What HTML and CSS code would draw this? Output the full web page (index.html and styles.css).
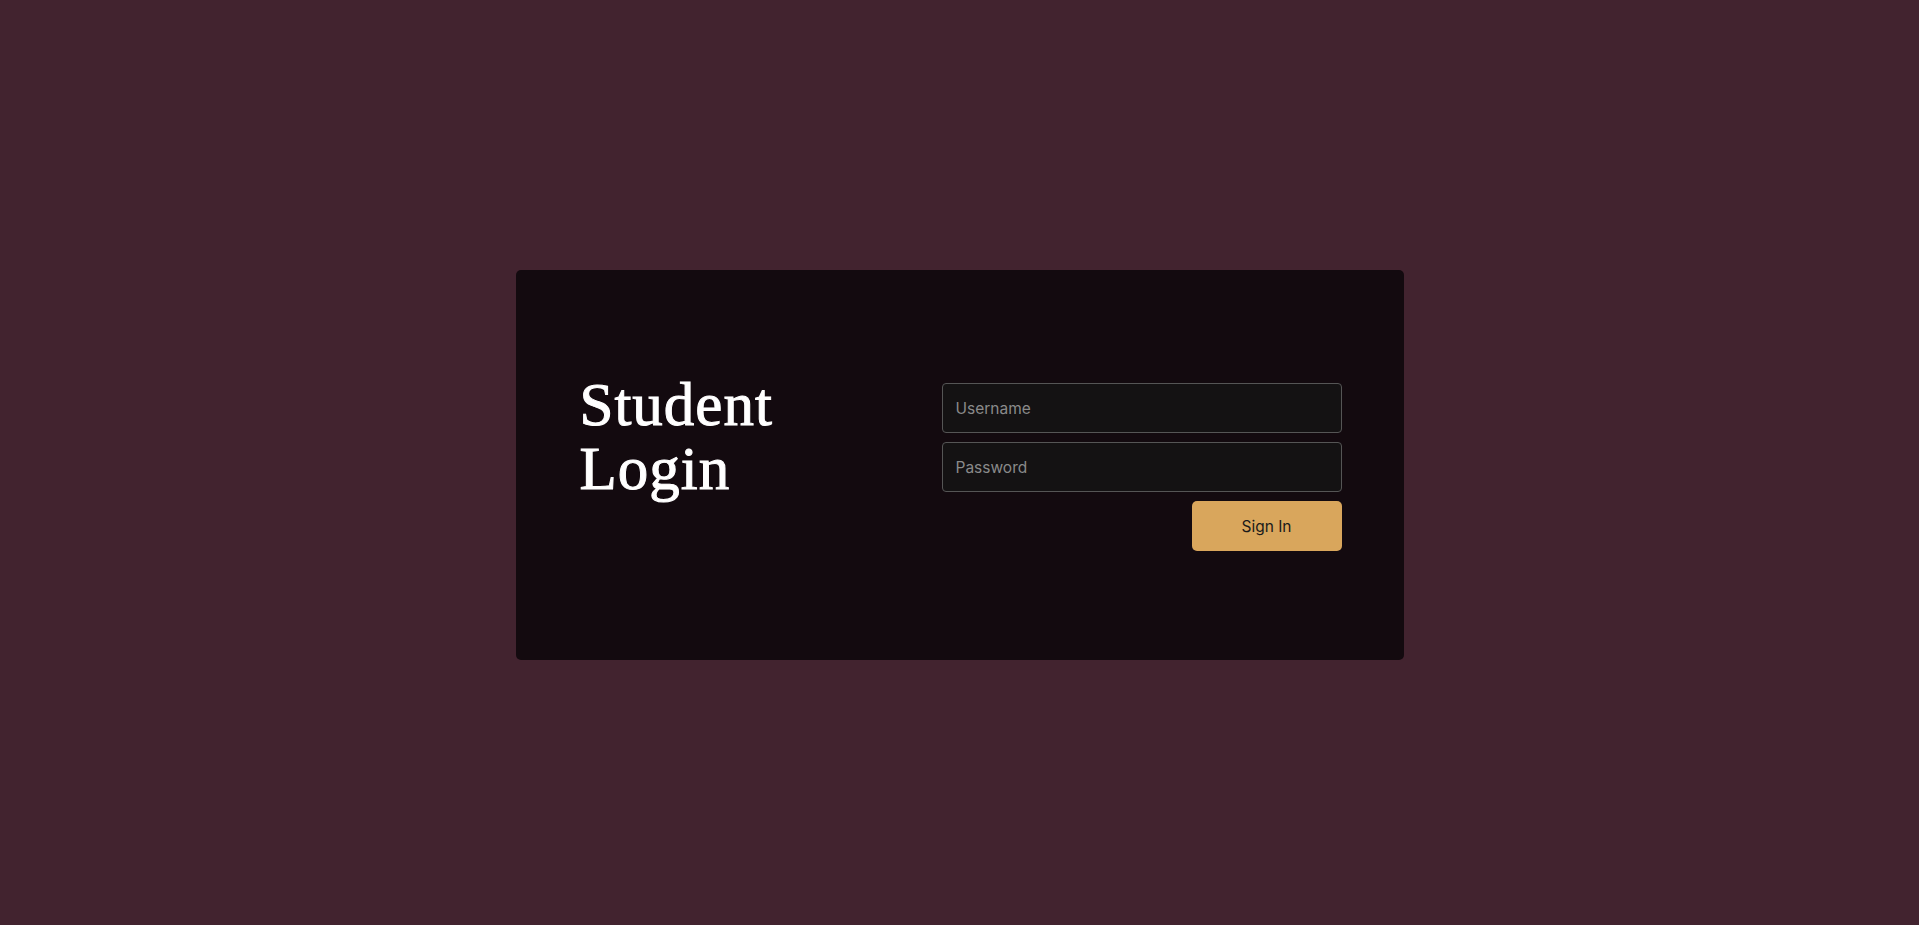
FILE: index.html
```html
<!doctype html>
<html lang="en">
  <head>
    <meta charset="utf-8" />
    <title>Student Login</title>
    <link rel="stylesheet" href="styles.css">
  </head>
  <body>
    <!-- Login card -->
    <div class="loginCard">
      <h1 class="title">Student Login</h1>
      <form class="loginForm">
        <input type="text" placeholder="Username" />
        <input type="password" placeholder="Password" />
        <div class="actions">
          <button type="button">Sign In</button>
        </div>
      </form>
    </div>
  </body>
</html>
```

FILE: styles.css
```css
* {
  box-sizing: border-box;
}
body {
  background: #42232f;
  color: #fff;
  font-family: Inter, "Noto Sans", sans-serif;
  margin: 0;
  min-height: 925px;
  display: flex;
  align-items: center;
  justify-content: center;
  padding-top: 5px;
}
.loginCard {
  width: 888px;
  height: 390px;
  background: #130a0f;
  border-radius: 5px;
  padding: 0 62px 0 64px;
  display: flex;
  align-items: center;
  justify-content: space-between;
}
.title {
  font-family: "Liberation Serif", serif;
  font-weight: normal;
  font-size: 61px;
  line-height: 64px;
  letter-spacing: 1px;
  width: 240px;
  margin: 0 0 56px;
  -webkit-text-stroke: 1px #fff;
}
.loginForm {
  width: 400px;
  margin-top: 4px;
  display: flex;
  flex-direction: column;
  gap: 9px;
}
input {
  height: 50px;
  padding: 0 13px;
  background: #141213;
  border: 1px solid #555;
  border-radius: 4px;
  color: #ddd;
  font-family: inherit;
  font-size: 15.5px;
}
input::placeholder {
  color: #8a8a8a;
}
.actions {
  display: flex;
  justify-content: flex-end;
}
button {
  width: 150px;
  height: 50px;
  border: none;
  border-radius: 5px;
  background-color: #d9a65c;
  color: #1a1a1a;
  font-family: inherit;
  font-size: 15.5px;
  cursor: pointer;
}
```
